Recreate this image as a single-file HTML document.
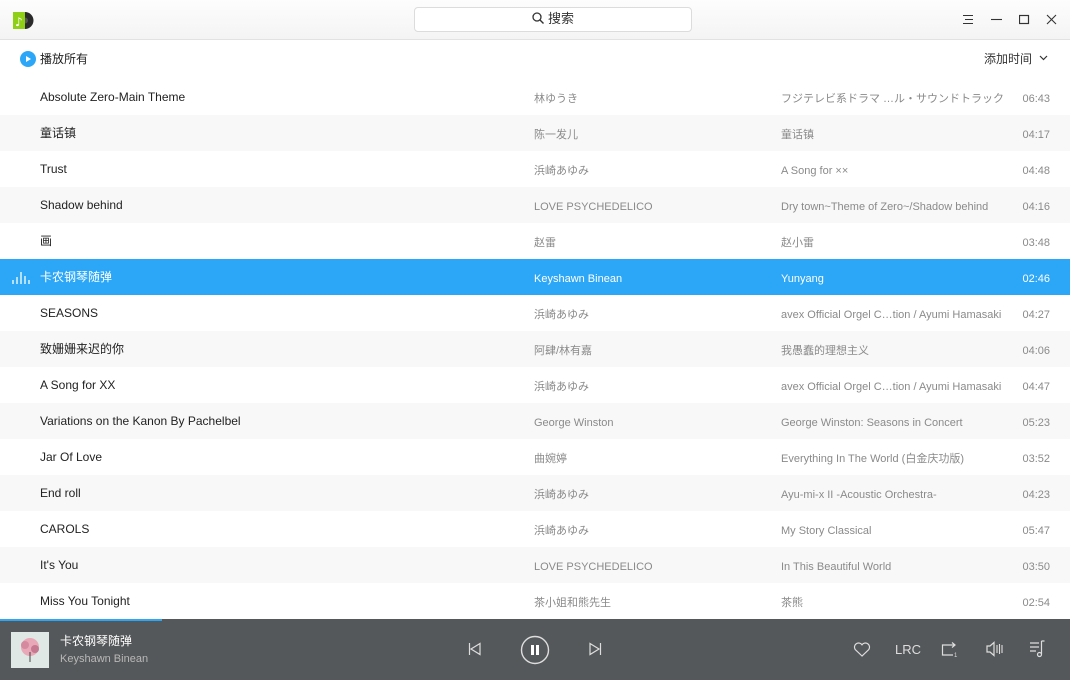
<!DOCTYPE html>
<html><head><meta charset="utf-8"><style>
*{margin:0;padding:0;box-sizing:border-box}
body{width:1070px;height:680px;overflow:hidden;background:#fff;font-family:"Liberation Sans","Noto Sans CJK SC","Noto Sans CJK JP",sans-serif;font-size:12px;color:#222;position:relative}
.hdr{position:absolute;left:0;top:0;width:1070px;height:40px;background:linear-gradient(#fdfdfd,#f4f4f4);border-bottom:1px solid #e2e2e2}
.search{position:absolute;left:414px;top:7px;width:278px;height:25px;background:#fff;border:1px solid #dcdcdc;border-radius:4px;text-align:center;line-height:22px;font-size:13px;color:#333}
.row{position:absolute;left:0;width:1070px;height:36px;line-height:36px}
.row.g{background:#f8f8f8}
.row.sel{background:#2ca7f8;color:#fff}
.row span{position:absolute;white-space:nowrap;top:0;line-height:36px;height:36px}
.t{left:40px;color:#222}
.row .a,.row .al,.row .d{top:2px}
.a{left:534px;color:#8a8a8a;font-size:11px}
.al{left:781px;color:#8a8a8a;font-size:11px}
.d{right:20px;color:#8a8a8a;font-size:11px}
.sel span{color:#fff}
.ftr{position:absolute;left:0;top:619px;width:1070px;height:61px;background:#55585a}
.prog{position:absolute;left:0;top:619px;height:2px;width:162px;background:#2ca7f8}
.ic{position:absolute}
</style></head><body>
<div class="hdr">
<svg class="ic" style="left:12px;top:11px" width="23" height="19"><circle cx="13" cy="9.5" r="8.5" fill="#2a2a2a"/><circle cx="13" cy="9.5" r="3" fill="#555"/><rect x="1" y="1" width="12" height="17" fill="#8fcf16"/><text x="3" y="15" font-size="12" fill="#fff" font-family="DejaVu Sans">♪</text></svg>
<div class="search"><svg width="12" height="12" style="vertical-align:-1px;margin-right:4px"><circle cx="5" cy="5" r="4" fill="none" stroke="#333" stroke-width="1.3"/><line x1="8" y1="8" x2="11.5" y2="11.5" stroke="#333" stroke-width="1.4"/></svg>搜索</div>
<svg class="ic" style="left:963px;top:14px" width="11" height="11"><path d="M0 1.5h10M2 5.5h8M0 9.5h10" stroke="#333" stroke-width="1.1"/></svg>
<svg class="ic" style="left:991px;top:14px" width="11" height="11"><path d="M0 5.5h11" stroke="#333" stroke-width="1.1"/></svg>
<svg class="ic" style="left:1019px;top:14px" width="11" height="11"><rect x="0.5" y="1.5" width="9" height="8" fill="none" stroke="#333" stroke-width="1.2"/></svg>
<svg class="ic" style="left:1046px;top:14px" width="11" height="11"><path d="M1 1l9 9M10 1l-9 9" stroke="#333" stroke-width="1.1"/></svg>
</div>
<svg class="ic" style="left:20px;top:51px" width="16" height="16"><circle cx="8" cy="8" r="8" fill="#2ca7f8"/><path d="M6 5l5 3-5 3z" fill="#fff"/></svg>
<div style="position:absolute;left:40px;top:50px;font-size:12px;color:#222">播放所有</div>
<div style="position:absolute;left:984px;top:50px;font-size:12px;color:#333">添加时间</div>
<svg class="ic" style="left:1039px;top:55px" width="9" height="6"><path d="M1 1l3.5 3.5L8 1" stroke="#333" stroke-width="1.2" fill="none"/></svg>

<div class="row" style="top:79px"><span class="t">Absolute Zero-Main Theme</span><span class="a">林ゆうき</span><span class="al">フジテレビ系ドラマ …ル・サウンドトラック</span><span class="d">06:43</span></div>
<div class="row g" style="top:115px"><span class="t">童话镇</span><span class="a">陈一发儿</span><span class="al">童话镇</span><span class="d">04:17</span></div>
<div class="row" style="top:151px"><span class="t">Trust</span><span class="a">浜崎あゆみ</span><span class="al">A Song for ××</span><span class="d">04:48</span></div>
<div class="row g" style="top:187px"><span class="t">Shadow behind</span><span class="a">LOVE PSYCHEDELICO</span><span class="al">Dry town~Theme of Zero~/Shadow behind</span><span class="d">04:16</span></div>
<div class="row" style="top:223px"><span class="t">画</span><span class="a">赵雷</span><span class="al">赵小雷</span><span class="d">03:48</span></div>
<div class="row sel" style="top:259px"><svg class="ic" style="left:12px;top:12px" width="18" height="13"><path d="M1 13v-4M5 13v-7M9 13v-12M13 13v-8M17 13v-4" stroke="#fff" stroke-width="1.3"/></svg><span class="t">卡农钢琴随弹</span><span class="a">Keyshawn Binean</span><span class="al">Yunyang</span><span class="d">02:46</span></div>
<div class="row" style="top:295px"><span class="t">SEASONS</span><span class="a">浜崎あゆみ</span><span class="al">avex Official Orgel C…tion / Ayumi Hamasaki</span><span class="d">04:27</span></div>
<div class="row g" style="top:331px"><span class="t">致姗姗来迟的你</span><span class="a">阿肆/林有嘉</span><span class="al">我愚蠢的理想主义</span><span class="d">04:06</span></div>
<div class="row" style="top:367px"><span class="t">A Song for XX</span><span class="a">浜崎あゆみ</span><span class="al">avex Official Orgel C…tion / Ayumi Hamasaki</span><span class="d">04:47</span></div>
<div class="row g" style="top:403px"><span class="t">Variations on the Kanon By Pachelbel</span><span class="a">George Winston</span><span class="al">George Winston: Seasons in Concert</span><span class="d">05:23</span></div>
<div class="row" style="top:439px"><span class="t">Jar Of Love</span><span class="a">曲婉婷</span><span class="al">Everything In The World (白金庆功版)</span><span class="d">03:52</span></div>
<div class="row g" style="top:475px"><span class="t">End roll</span><span class="a">浜崎あゆみ</span><span class="al">Ayu-mi-x II -Acoustic Orchestra-</span><span class="d">04:23</span></div>
<div class="row" style="top:511px"><span class="t">CAROLS</span><span class="a">浜崎あゆみ</span><span class="al">My Story Classical</span><span class="d">05:47</span></div>
<div class="row g" style="top:547px"><span class="t">It's You</span><span class="a">LOVE PSYCHEDELICO</span><span class="al">In This Beautiful World</span><span class="d">03:50</span></div>
<div class="row" style="top:583px"><span class="t">Miss You Tonight</span><span class="a">茶小姐和熊先生</span><span class="al">茶熊</span><span class="d">02:54</span></div>

<div class="ftr">
<svg class="ic" style="left:11px;top:13px" width="38" height="36"><rect width="38" height="36" fill="#dfe8e4"/><circle cx="19" cy="15" r="9" fill="#e8a8b8"/><circle cx="14" cy="13" r="4" fill="#d58aa0"/><circle cx="24" cy="17" r="4" fill="#c57890"/><path d="M19 20v10" stroke="#444" stroke-width="1"/></svg>
<div style="position:absolute;left:60px;top:13px;font-size:12px;color:#fff">卡农钢琴随弹</div>
<div style="position:absolute;left:60px;top:34px;font-size:11px;color:#b8b8b8">Keyshawn Binean</div>
<svg class="ic" style="left:468px;top:23px" width="14" height="14"><path d="M1.5 1v12M12 1.5L3 7l9 5.5z" stroke="#ddd" stroke-width="1.2" fill="none"/></svg>
<svg class="ic" style="left:520px;top:16px" width="30" height="30"><circle cx="15" cy="15" r="13.5" stroke="#ddd" stroke-width="1.4" fill="none"/><rect x="11" y="10" width="3" height="10" fill="#fff"/><rect x="16" y="10" width="3" height="10" fill="#fff"/></svg>
<svg class="ic" style="left:588px;top:23px" width="14" height="14"><path d="M12.5 1v12M2 1.5L11 7l-9 5.5z" stroke="#ddd" stroke-width="1.2" fill="none"/></svg>
<svg class="ic" style="left:853px;top:23px" width="18" height="15"><path d="M9 14L2.2 7.5A3.8 3.8 0 0 1 9 2.8a3.8 3.8 0 0 1 6.8 4.7z" stroke="#ddd" stroke-width="1.2" fill="none"/></svg>
<div style="position:absolute;left:895px;top:23px;font-size:13px;color:#ddd">LRC</div>
<svg class="ic" style="left:941px;top:22px" width="18" height="17"><path d="M14 4H1.5v10H12M11 1.5l3 2.5-3 2.5" stroke="#ddd" stroke-width="1.2" fill="none"/><text x="13" y="16" font-size="6" fill="#ddd">1</text></svg>
<svg class="ic" style="left:986px;top:22px" width="17" height="16"><path d="M1 5h3l4-3.5v13L4 11H1z" stroke="#ddd" stroke-width="1.2" fill="none"/><path d="M11 4v8M13.5 3v10M16 4v8" stroke="#ddd" stroke-width="1.1"/></svg>
<svg class="ic" style="left:1029px;top:21px" width="17" height="18"><path d="M1 3h9M1 7h9M1 11h6M12.5 1v13M12.5 1h3" stroke="#ddd" stroke-width="1.2" fill="none"/><circle cx="10.5" cy="14.5" r="2" stroke="#ddd" stroke-width="1.2" fill="none"/></svg>
</div>
<div class="prog"></div>
</body></html>
